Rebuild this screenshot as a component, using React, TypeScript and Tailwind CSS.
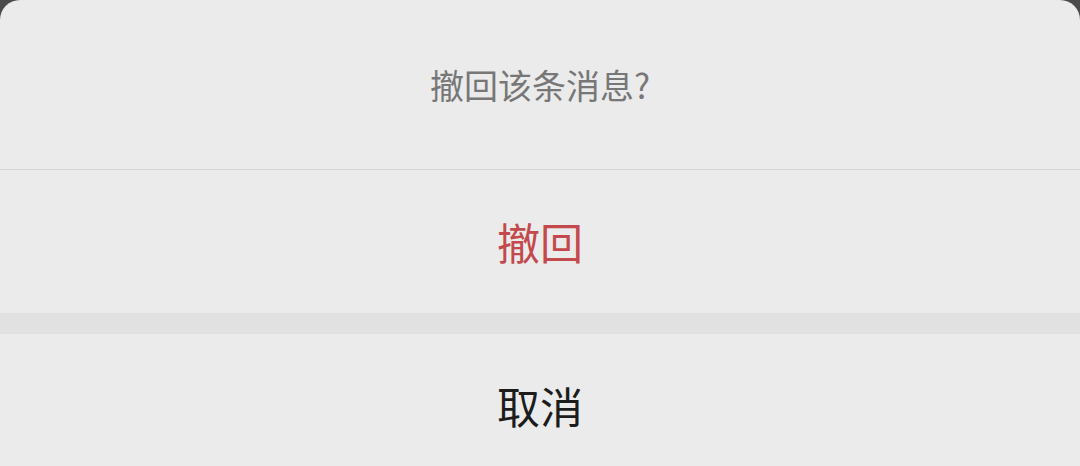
import React from "react";

export default function App() {
  return (
    <div className="h-[466px] w-[1080px] overflow-hidden bg-[#4a4a4a]">
      <div
        className="flex flex-col rounded-t-[20px] bg-[#ebebeb]"
        style={{ fontFamily: '"Noto Sans CJK SC", "Noto Sans", sans-serif' }}
      >
        {/* Title */}
        <div className="flex h-[169px] items-center justify-center">
          <span className="text-[34px] text-[#777777] leading-none">撤回该条消息?</span>
        </div>
        <div className="h-px bg-[#d6d6d6]" />

        {/* Action */}
        <button className="flex h-[143px] items-center justify-center">
          <span className="text-[43px] text-[#c4494c] leading-none">撤回</span>
        </button>

        <div className="h-[21px] bg-[#e1e1e1]" />

        {/* Cancel */}
        <button className="flex h-[143px] items-center justify-center">
          <span className="text-[43px] text-[#1c1c1c] leading-none">取消</span>
        </button>
      </div>
    </div>
  );
}
